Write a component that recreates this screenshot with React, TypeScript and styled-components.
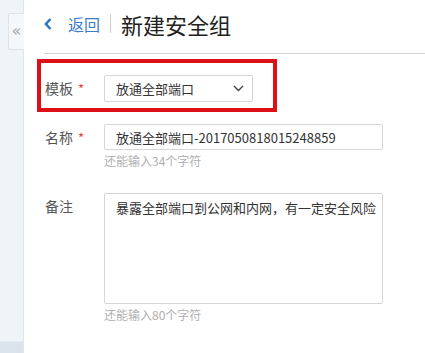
import React from "react";
import styled, { createGlobalStyle } from "styled-components";

const Global = createGlobalStyle`
  html, body { margin: 0; padding: 0; background: #fff; }
  body { font-family: "Noto Sans CJK SC", "Noto Sans", sans-serif; }
`;

const Page = styled.div`
  display: flex;
  width: 425px;
  height: 353px;
  overflow: hidden;
`;

const Sidebar = styled.aside`
  position: relative;
  width: 24px;
  flex: none;
  background: #eef4f8;
  border-right: 1px solid #dfe5ea;
  box-sizing: border-box;
  display: flex;
  flex-direction: column;
`;

const SidebarFill = styled.div`
  flex: 1;
`;

const SidebarFoot = styled.div`
  height: 11px;
  background: #dbe4ed;
  border-top: 1px solid #e3ebf5;
`;

const CollapseTab = styled.div`
  position: absolute;
  left: 8px;
  top: 13px;
  width: 16px;
  height: 37px;
  box-sizing: border-box;
  background: #f5f8fa;
  border: 1px solid #dde3e8;
  border-right: none;
  border-radius: 2px 0 0 2px;
  display: flex;
  align-items: center;
  justify-content: center;
  color: #a2a9b0;
  font-family: "DejaVu Sans", sans-serif;
  font-size: 16px;
  line-height: 1;
  padding-bottom: 2px;
`;

const Main = styled.main`
  flex: 1;
  display: flex;
  flex-direction: column;
`;

const Header = styled.header`
  margin-left: 20px;
  height: 54px;
  border-bottom: 1px solid #d4d4d4;
  display: flex;
  align-items: center;
  padding-bottom: 6px;
  box-sizing: border-box;
`;

const Back = styled.a`
  display: flex;
  align-items: center;
  gap: 16px;
  color: #3b7dc8;
  font-size: 16px;
  text-decoration: none;
`;

const Divider = styled.span`
  width: 1px;
  height: 19px;
  background: #d0d0d0;
  margin: 0 10px 0 10px;
`;

const Title = styled.h1`
  margin: 0;
  font-size: 22px;
  font-weight: 400;
  color: #222;
`;

const Form = styled.div`
  display: flex;
  flex-direction: column;
  padding-top: 5px;
`;

const Row = styled.div<{ $highlight?: boolean; $top?: number }>`
  display: grid;
  grid-template-columns: 59px auto;
  align-items: start;
  margin-top: ${(p) => p.$top ?? 0}px;
  ${(p) =>
    p.$highlight
      ? `margin-left: 13px; width: 240px; height: 53px; box-sizing: border-box;
         border: 4px solid #dd1018; padding: 12px 0 0 4px;`
      : `margin-left: 21px;`}
`;

const Label = styled.label`
  font-size: 14px;
  color: #555;
  line-height: 27px;
  display: flex;
  gap: 5px;
`;

const Star = styled.span`
  color: #e0443c;
  font-size: 13px;
`;

const Field = styled.div`
  display: flex;
  flex-direction: column;
`;

const Select = styled.div`
  width: 149px;
  height: 27px;
  box-sizing: border-box;
  border: 1px solid #d6d6d6;
  border-radius: 2px;
  background: #fff;
  display: flex;
  align-items: center;
  justify-content: space-between;
  padding: 0 8px 0 11px;
  font-size: 13px;
  color: #333;
`;

const Input = styled.div`
  width: 279px;
  height: 26px;
  box-sizing: border-box;
  border: 1px solid #d6d6d6;
  border-radius: 2px;
  display: flex;
  align-items: center;
  padding-left: 11px;
  font-size: 13px;
  color: #333;
`;

const TextArea = styled.div`
  width: 279px;
  height: 111px;
  box-sizing: border-box;
  border: 1px solid #d6d6d6;
  border-radius: 2px;
  padding: 4px 0 0 11px;
  font-size: 13px;
  color: #333;
  line-height: 20px;
`;

const Hint = styled.div`
  font-size: 12px;
  color: #b0b0b0;
  margin-top: 2px;
  line-height: 18px;
`;

export default function App() {
  return (
    <>
      <Global />
      <Page>
        <Sidebar>
          <SidebarFill />
          <SidebarFoot />
          <CollapseTab>«</CollapseTab>
        </Sidebar>
        <Main>
          <Header>
            <Back href="#">
              <svg width="8" height="12" viewBox="0 0 8 12">
                <path d="M6.5 1 L1.8 6 L6.5 11" fill="none" stroke="#1f74c6" strokeWidth="2.4" />
              </svg>
              返回
            </Back>
            <Divider />
            <Title>新建安全组</Title>
          </Header>
          <Form>
            <Row $highlight>
              <Label>
                模板<Star>*</Star>
              </Label>
              <Select>
                放通全部端口
                <svg width="11" height="7" viewBox="0 0 11 7">
                  <path d="M1 1 L5.5 5.5 L10 1" fill="none" stroke="#444" strokeWidth="1.4" />
                </svg>
              </Select>
            </Row>
            <Row $top={12}>
              <Label>
                名称<Star>*</Star>
              </Label>
              <Field>
                <Input>放通全部端口-2017050818015248859</Input>
                <Hint>还能输入34个字符</Hint>
              </Field>
            </Row>
            <Row $top={23}>
              <Label>备注</Label>
              <Field>
                <TextArea>暴露全部端口到公网和内网，有一定安全风险</TextArea>
                <Hint>还能输入80个字符</Hint>
              </Field>
            </Row>
          </Form>
        </Main>
      </Page>
    </>
  );
}
